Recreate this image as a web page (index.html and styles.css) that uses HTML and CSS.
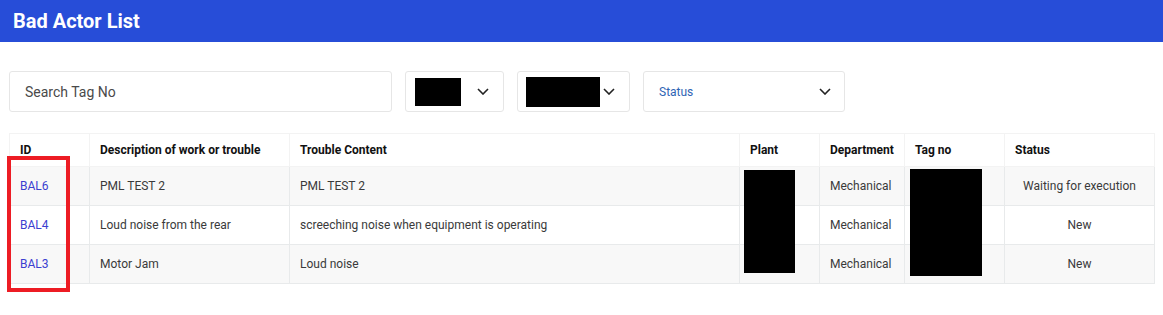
FILE: index.html
```html
<!DOCTYPE html>
<html>
  <head>
    <title>Bad Actor List</title>
    <link rel="stylesheet" href="styles.css">
  </head>
  <body>
    <div class="top-bar">
      <h1>Bad Actor List</h1>
    </div>

    <div class="filters">
      <input type="text" class="search-box" placeholder="Search Tag No">
      <div class="select-box small">
        <span class="redact redact-a"></span>
        <svg class="chevron" viewBox="0 0 12 7" width="12" height="7"><path d="M1 1l5 5 5-5" fill="none" stroke="#222" stroke-width="1.6"/></svg>
      </div>
      <div class="select-box medium">
        <span class="redact redact-b"></span>
        <svg class="chevron" viewBox="0 0 12 7" width="12" height="7"><path d="M1 1l5 5 5-5" fill="none" stroke="#222" stroke-width="1.6"/></svg>
      </div>
      <div class="select-box wide">
        <span class="select-label">Status</span>
        <svg class="chevron" viewBox="0 0 12 7" width="12" height="7"><path d="M1 1l5 5 5-5" fill="none" stroke="#222" stroke-width="1.6"/></svg>
      </div>
    </div>

    <div class="table-wrap">
      <table class="actor-table">
        <thead>
          <tr>
            <th class="col-id">ID</th>
            <th class="col-desc">Description of work or trouble</th>
            <th class="col-content">Trouble Content</th>
            <th class="col-plant">Plant</th>
            <th class="col-dept">Department</th>
            <th class="col-tag">Tag no</th>
            <th class="col-status">Status</th>
          </tr>
        </thead>
        <tbody>
          <tr>
            <td><a href="#">BAL6</a></td>
            <td>PML TEST 2</td>
            <td>PML TEST 2</td>
            <td></td>
            <td>Mechanical</td>
            <td></td>
            <td class="status">Waiting for execution</td>
          </tr>
          <tr>
            <td><a href="#">BAL4</a></td>
            <td>Loud noise from the rear</td>
            <td>screeching noise when equipment is operating</td>
            <td></td>
            <td>Mechanical</td>
            <td></td>
            <td class="status">New</td>
          </tr>
          <tr>
            <td><a href="#">BAL3</a></td>
            <td>Motor Jam</td>
            <td>Loud noise</td>
            <td></td>
            <td>Mechanical</td>
            <td></td>
            <td class="status">New</td>
          </tr>
        </tbody>
      </table>
      <div class="redact redact-plant"></div>
      <div class="redact redact-tag"></div>
      <div class="highlight"></div>
    </div>
  </body>
</html>
```

FILE: styles.css
```css
body {
  margin: 0;
  font-family: Roboto, "Liberation Sans", sans-serif;
  color: #333;
  background: #fff;
}
.top-bar {
  background-color: #274dd8;
  height: 42px;
  display: flex;
  align-items: center;
  padding-left: 13px;
}
.top-bar h1 {
  margin: 0;
  color: #fff;
  font-size: 20px;
  font-weight: 700;
}
.filters {
  display: flex;
  gap: 13px;
  margin-top: 29px;
  padding: 0 9px;
}
.search-box {
  width: 383px;
  height: 41px;
  box-sizing: border-box;
  border: 1px solid #e6e6e6;
  border-radius: 3px;
  padding: 0 15px;
  font-family: inherit;
  font-size: 14px;
  color: #444;
  outline: none;
}
.search-box::placeholder {
  color: #4a4a4a;
}
.select-box {
  height: 41px;
  box-sizing: border-box;
  border: 1px solid #e6e6e6;
  border-radius: 3px;
  display: flex;
  align-items: center;
}
.select-box.small {
  width: 99px;
  padding-left: 9px;
}
.select-box.medium {
  width: 113px;
  padding-left: 8px;
}
.select-box.wide {
  width: 202px;
  padding-left: 15px;
}
.select-box .chevron {
  margin-left: auto;
}
.select-box.small .chevron {
  margin-right: 14px;
}
.select-box.medium .chevron {
  margin-left: 3px;
}
.select-box.wide .chevron {
  margin-right: 13px;
}
.select-label {
  font-size: 12px;
  color: #2f64b4;
}
.redact {
  display: block;
  background: #000;
}
.redact-a {
  width: 46px;
  height: 28px;
}
.redact-b {
  width: 74px;
  height: 30px;
}
.table-wrap {
  position: relative;
  margin: 21px 9px 0;
  padding-bottom: 20px;
}
.actor-table {
  width: 1145px;
  border-collapse: collapse;
  table-layout: fixed;
  font-size: 12px;
}
.actor-table th {
  height: 33px;
  box-sizing: border-box;
  text-align: left;
  font-weight: 700;
  color: #111;
  padding: 0 10px;
  border: 1px solid #f3f3f3;
  background: #fff;
}
.actor-table td {
  height: 39px;
  box-sizing: border-box;
  padding: 0 10px;
  border: 1px solid #e8eaeb;
  color: #3a3a3a;
}
.actor-table tbody tr:nth-child(odd) td {
  background: #f8f8f8;
}
.actor-table a {
  color: #3b3fd0;
  text-decoration: none;
}
.actor-table td.status {
  text-align: center;
}
.col-id { width: 80px; }
.col-desc { width: 200px; }
.col-content { width: 450px; }
.col-plant { width: 80px; }
.col-dept { width: 85px; }
.col-tag { width: 100px; }
.col-status { width: 150px; }
.redact-plant {
  position: absolute;
  left: 735px;
  top: 37px;
  width: 51px;
  height: 103px;
}
.redact-tag {
  position: absolute;
  left: 901px;
  top: 36px;
  width: 72px;
  height: 107px;
}
.highlight {
  position: absolute;
  left: -2px;
  top: 23px;
  width: 63px;
  height: 136px;
  box-sizing: border-box;
  border: 4px solid #ed1c24;
}
```
